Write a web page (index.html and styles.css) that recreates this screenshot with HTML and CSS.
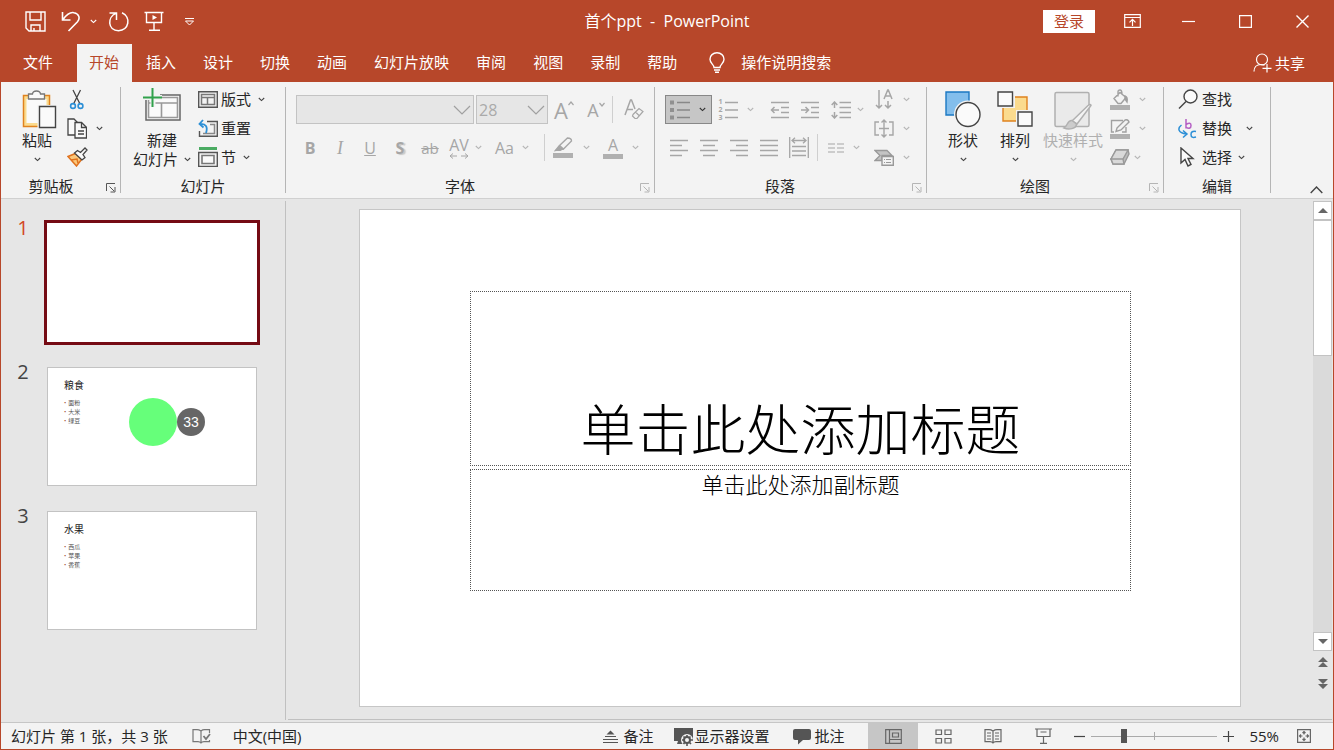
FILE: index.html
```html
<!DOCTYPE html>
<html lang="zh-CN">
<head>
<meta charset="utf-8">
<meta name="viewport" content="width=device-width, initial-scale=1">
<title>首个ppt - PowerPoint</title>
<link rel="stylesheet" href="styles.css">
</head>
<body>
<svg class="defs" aria-hidden="true">
  <symbol id="chev" viewBox="0 0 7 5"><path d="M.8 1l2.700 2.600L6.200 1" fill="none" stroke="currentColor" stroke-width="1.1"/></symbol>
  <symbol id="launch" viewBox="0 0 10 10"><path d="M.5 8V.5H9M3.500 3.500L8 8M9 4v5H4.500" fill="none" stroke="currentColor"/></symbol>
</svg>
<div class="app">
  <header class="titlebar">
    <div class="quick">
      <button class="ib save" aria-label="保存"><svg width="21" height="21" fill="none" stroke="currentColor" stroke-width="1.400"><path d="M1 1h19v19H4l-3-3zM5 1v8h11V1M6 20v-6h9v6M9 17v3"/></svg></button>
      <button class="ib undo" aria-label="撤消"><svg width="20" height="21" fill="none" stroke="currentColor" stroke-width="1.600"><path d="M1.500 1v8h8M2 8.500C6 3 10 1 13 1.700c5 1 6.500 5.500 3.500 9L7.500 20"/></svg></button>
      <button class="ib more" aria-label="撤消选项"><svg width="7" height="5"><use href="#chev"/></svg></button>
      <button class="ib redo" aria-label="重复"><svg width="22" height="21" fill="none" stroke="currentColor" stroke-width="1.500"><path d="M8.500 9V2H1.500M8 2.200C-1 6-.5 19.500 10.500 19.700 21 19.500 23.500 6 14 1.800"/></svg></button>
      <button class="ib show" aria-label="从头开始"><svg width="20" height="21" fill="none" stroke="currentColor" stroke-width="1.400"><path d="M.5 1.500h19M2.500 1.500v10h15v-10M10 11.500V19M5 19.300h11"/><path d="M8.500 4v5l4.500-2.500z" fill="currentColor" stroke="none"/></svg></button>
      <button class="ib" aria-label="自定义快速访问工具栏"><svg width="11" height="9" fill="none" stroke="currentColor"><path d="M1 1.500h9M1.500 4h8l-4 4z"/></svg></button>
    </div>
    <h1 class="doc-name">首个ppt &nbsp;-&nbsp; PowerPoint</h1>
    <div class="win">
      <button class="login">登录</button>
      <button class="wb" aria-label="功能区显示选项"><svg width="17" height="14" fill="none" stroke="currentColor" stroke-width="1.200"><path d="M.7.700h15.600v12.600H.700zM.700 3.500h15.600M8.500 12V5.500M5.500 8.300l3-3 3 3"/></svg></button>
      <button class="wb" aria-label="最小化"><svg width="13" height="13"><path d="M0 6.500h13" stroke="currentColor" stroke-width="1.200"/></svg></button>
      <button class="wb" aria-label="最大化"><svg width="13" height="13"><path d="M.600.600h11.800v11.800H.600z" fill="none" stroke="currentColor" stroke-width="1.200"/></svg></button>
      <button class="wb" aria-label="关闭"><svg width="13" height="13"><path d="M.500.500l12 12M12.500.500l-12 12" stroke="currentColor" stroke-width="1.400"/></svg></button>
    </div>
  </header>
  <nav class="tabs">
    <button class="tab file">文件</button>
    <button class="tab on">开始</button>
    <button class="tab">插入</button>
    <button class="tab">设计</button>
    <button class="tab">切换</button>
    <button class="tab">动画</button>
    <button class="tab">幻灯片放映</button>
    <button class="tab">审阅</button>
    <button class="tab">视图</button>
    <button class="tab">录制</button>
    <button class="tab">帮助</button>
    <button class="tab tell"><svg width="16" height="21" fill="none" stroke="currentColor" stroke-width="1.400"><path d="M5 15.500c0-3-4-4-4-8.300C1 3.500 4 .800 8 .800s7 2.700 7 6.400c0 4.300-4 5.300-4 8.300zM5 18h6M6 20.300h4"/></svg>操作说明搜索</button>
    <button class="tab share"><svg width="19" height="20" fill="none" stroke="currentColor" stroke-width="1.200"><circle cx="9" cy="6.500" r="5.500"/><path d="M1 18.500c0-4 2.500-7 7-7 1.500 0 2.500.200 3.500.700M14 11v8.500M9.500 15.300H18.500"/></svg>共享</button>
  </nav>

  <section class="ribbon">
    <div class="group clip">
      <div class="body">
        <button class="big"><svg width="36" height="40"><path d="M1.500 5.500h26v31h-26z" fill="#fbdb8e" stroke="#e0821e" stroke-width="1.500"/><path d="M4.500 9h20v24h-20z" fill="#fafafa"/><path d="M6.500 9V4h4c.5-4 7.500-4 8 0h4v5z" fill="#fafafa" stroke="#777" stroke-width="1.300"/><path d="M15.500 15h19v24h-19z" fill="#f3f3f3"/><path d="M17.500 16.500h16v21h-16z" fill="#fafafa" stroke="#444" stroke-width="1.400"/></svg><span>粘贴</span><svg class="chev"><use href="#chev"/></svg></button>
        <div class="stack">
          <button class="row" aria-label="剪切"><svg width="20" height="21" fill="none"><path d="M6 1l7 14M13.500 1L6.500 15" stroke="#444" stroke-width="1.300"/><circle cx="6" cy="17" r="2.400" stroke="#2c8fd6" stroke-width="1.600"/><circle cx="13.500" cy="17" r="2.400" stroke="#2c8fd6" stroke-width="1.600"/></svg></button>
          <button class="row wide" aria-label="复制"><svg width="20" height="21" fill="#fafafa" stroke="#444" stroke-width="1.300"><path d="M1 1h6l4 4v12H1z"/><path d="M8 4.500h6.500l5 5v10.500H8z"/><path d="M14.500 4.500v5h5M11 13h6M11 16h6" fill="none"/></svg><svg class="chev"><use href="#chev"/></svg></button>
          <button class="row" aria-label="格式刷"><svg width="21" height="20"><path d="M1 9.500l7.500-3 6 6-5 6.500z" fill="#fbc87b" stroke="#e0721e" stroke-width="1.500"/><path d="M4 13l6-1 1 4" fill="none" stroke="#e0721e" stroke-width="1.500"/><path d="M7.500 6l3-2.500 3 2 4.500-4.500 2 2-4 4.500 2 3-3 2.500z" fill="#fafafa" stroke="#444" stroke-width="1.300"/></svg></button>
        </div>
      </div>
      <div class="label"><span>剪贴板</span><button class="launch" aria-label="剪贴板设置"><svg><use href="#launch"/></svg></button></div>
    </div>
    <i class="sep"></i>
    <div class="group slides">
      <div class="body">
        <button class="big"><svg width="40" height="40"><path d="M4 8h34v25H4z" fill="#fafafa" stroke="#666" stroke-width="1.500"/><path d="M6.500 10.500h29v20h-29zM6.500 16h29M19.500 16v14.500" fill="none" stroke="#999" stroke-width="1.600"/><path d="M1 5h17v3H6v4H1z" fill="#f3f3f3"/><path d="M11 1v19M1 10.500h19" stroke="#f3f3f3" stroke-width="5"/><path d="M10.500 1v19M1 10.500h19" stroke="#31a24c" stroke-width="2"/></svg><span>新建</span><span class="line2">幻灯片 <svg class="chev"><use href="#chev"/></svg></span></button>
        <div class="stack">
          <button class="row"><svg width="20" height="17" fill="none"><path d="M.700.700h18.600v15.600H.700z" stroke="#555" stroke-width="1.400"/><path d="M3.500 3.500h13v10h-13zM3.500 6.500h13M9.500 6.500v7" stroke="#777" stroke-width="1.500"/></svg>版式<svg class="chev"><use href="#chev"/></svg></button>
          <button class="row"><svg width="20" height="18" fill="none"><path d="M9 2.500h10.300v14.800H1.500V12" stroke="#555" stroke-width="1.400"/><path d="M12 5.500h4.500v9H5" stroke="#888" stroke-width="1.500"/><path d="M5 1L1.500 5l4 3.500M2 5c6-.500 8 3 6 9" stroke="#2c8fd6" stroke-width="1.800"/></svg>重置</button>
          <button class="row"><svg width="20" height="20" fill="none"><path d="M1 1.500h18" stroke="#4aab62" stroke-width="3"/><path d="M.700 5.500h18.600v14H.700z" stroke="#555" stroke-width="1.400"/><path d="M4 8.500h12v8H4z" fill="#fafafa" stroke="#777" stroke-width="1.600"/></svg>节<svg class="chev"><use href="#chev"/></svg></button>
        </div>
      </div>
      <div class="label"><span>幻灯片</span></div>
    </div>
    <i class="sep"></i>
    <div class="group font off">
      <div class="body rows">
        <div class="line">
          <span class="combo face"><select aria-label="字体" disabled><option></option></select><svg width="18" height="10"><path d="M1 1l8 8 8-8" fill="none" stroke="currentColor" stroke-width="1.200"/></svg></span>
          <span class="combo size"><select aria-label="字号" disabled><option>28</option></select><svg width="18" height="10"><path d="M1 1l8 8 8-8" fill="none" stroke="currentColor" stroke-width="1.200"/></svg></span>
          <button class="t grow">A<svg width="6" height="20"><path d="M.500 5l2.500-3 2.500 3" fill="none" stroke="currentColor" stroke-width="1.200"/></svg></button>
          <button class="t shrink">A<svg width="6" height="20"><path d="M.500 3l2.500 3 2.500-3" fill="none" stroke="currentColor" stroke-width="1.200"/></svg></button>
          <i class="bar"></i>
          <button class="t clear" aria-label="清除所有格式"><svg width="20" height="21" fill="none" stroke="currentColor" stroke-width="1.500"><path d="M1 16L6.500 1h1L11 10M3 10.500h6"/><path d="M9 15.500l6-6 4 3-6 7h-2L8.500 17zM11.500 13l4 4" stroke-width="1.200"/></svg></button>
        </div>
        <div class="line">
          <button class="t"><b>B</b></button>
          <button class="t"><em>I</em></button>
          <button class="t"><u>U</u></button>
          <button class="t shadow"><b>S</b></button>
          <button class="t small"><s>ab</s></button>
          <button class="t split av"><span>AV<svg width="20" height="6"><path d="M4 .500L1 3l3 2.500M1 3h7M12 3h7M16 .500L19 3l-3 2.500" fill="none" stroke="currentColor"/></svg></span><svg class="chev"><use href="#chev"/></svg></button>
          <button class="t split aa"><span>Aa</span><svg class="chev"><use href="#chev"/></svg></button>
          <i class="bar"></i>
          <button class="t split" aria-label="突出显示"><svg width="20" height="21"><path d="M0 16h20v5H0z" fill="#b0b0b0"/><path d="M6.500 8.500L14.500 1q4 0 4 3l-8 8zM6.500 8.500L2.500 13.500l8-1.500" fill="none" stroke="currentColor" stroke-width="1.400"/><path d="M6 9l-4.500 5h6l3-2z" fill="currentColor"/></svg><svg class="chev"><use href="#chev"/></svg></button>
          <button class="t split color"><span>A</span><svg class="chev"><use href="#chev"/></svg></button>
        </div>
      </div>
      <div class="label"><span>字体</span><button class="launch" aria-label="字体设置"><svg><use href="#launch"/></svg></button></div>
    </div>
    <i class="sep"></i>
    <div class="group para off">
      <div class="body">
        <div class="rows">
          <div class="line">
            <button class="t split pressed" aria-label="项目符号"><svg width="20" height="20" stroke="currentColor"><path d="M0 2.500h4M0 10h4M0 17.500h4" stroke="#909090" stroke-width="4"/><path d="M7 2.500h13M7 10h13M7 17.500h13" stroke-width="1.500"/></svg><svg class="chev dark"><use href="#chev"/></svg></button>
            <button class="t split num" aria-label="编号"><span class="digits"><i>1</i><i>2</i><i>3</i></span><svg width="13" height="20" stroke="currentColor" stroke-width="1.500"><path d="M0 2.500h13M0 10h13M0 17.500h13"/></svg><svg class="chev"><use href="#chev"/></svg></button>
            <button class="t first" aria-label="减少缩进"><svg width="20" height="18" fill="none" stroke="currentColor" stroke-width="1.500"><path d="M1 1.500h18M11 6.500h8M11 11.500h8M1 16.500h18M1 9h8M4.500 6L1.500 9l3 3"/></svg></button>
            <button class="t" aria-label="增加缩进"><svg width="20" height="18" fill="none" stroke="currentColor" stroke-width="1.500"><path d="M1 1.500h18M11 6.500h8M11 11.500h8M1 16.500h18M1 9h8M5.500 6l3 3-3 3"/></svg></button>
            <button class="t split ls" aria-label="行距"><svg width="20" height="18" fill="none" stroke="currentColor" stroke-width="1.500"><path d="M8.500 1.500H20M8.500 6.500H20M8.500 11.500H20M8.500 16.500H20M3.500 1v6M3.500 11v6M.700 4l2.800-3 2.800 3M.700 14l2.800 3 2.800-3"/></svg><svg class="chev"><use href="#chev"/></svg></button>
          </div>
          <div class="line">
            <button class="t" aria-label="左对齐"><svg width="20" height="18" stroke="currentColor" stroke-width="1.500"><path d="M1 1.500h18M1 6.500h12M1 11.500h18M1 16.500h12"/></svg></button>
            <button class="t" aria-label="居中"><svg width="20" height="18" stroke="currentColor" stroke-width="1.500"><path d="M1 1.500h18M4 6.500h12M1 11.500h18M4 16.500h12"/></svg></button>
            <button class="t" aria-label="右对齐"><svg width="20" height="18" stroke="currentColor" stroke-width="1.500"><path d="M1 1.500h18M7 6.500h12M1 11.500h18M7 16.500h12"/></svg></button>
            <button class="t" aria-label="两端对齐"><svg width="20" height="18" stroke="currentColor" stroke-width="1.500"><path d="M1 1.500h18M1 6.500h18M1 11.500h18M1 16.500h18"/></svg></button>
            <button class="t" aria-label="分散对齐"><svg width="20" height="21" fill="none" stroke="currentColor" stroke-width="1.300"><path d="M.700 0v21M19.300 0v21M3 9.500h14M3 14h14M3 18.500h14M3 3.500h14M6 .800L3 3.500l3 2.700M14 .800l3 2.700-3 2.700"/></svg></button>
            <i class="bar"></i>
            <button class="t split cols" aria-label="分栏"><svg width="16" height="10" stroke="currentColor" stroke-width="1.200"><path d="M0 1h7M9 1h7M0 5h7M9 5h7M0 9h7M9 9h7"/></svg><svg class="chev"><use href="#chev"/></svg></button>
          </div>
        </div>
        <div class="stack">
          <button class="row" aria-label="文字方向"><svg width="20" height="21" fill="none" stroke="currentColor" stroke-width="1.500"><path d="M5 1v18M2 16l3 3 3-3M14 12v7M11 16l3 3 3-3M10 10l3.700-9h.600L18 10M11.500 7h5"/></svg><svg class="chev"><use href="#chev"/></svg></button>
          <button class="row" aria-label="对齐文本"><svg width="20" height="19" fill="none" stroke="currentColor" stroke-width="1.400"><path d="M5 3H1v13h4M15 3h4v13h-4M5 9.500h10M10 1v17M7.500 3.500L10 1l2.500 2.500M7.500 15.500L10 18l2.500-2.500"/></svg><svg class="chev"><use href="#chev"/></svg></button>
          <button class="row" aria-label="转换为 SmartArt"><svg width="20" height="17"><path d="M1 1.500h12l5 5H8v5H1l5-5z" fill="#c4c4c4" stroke="#999" stroke-width="1.300"/><path d="M8 7.500h11.300v8.800H8z" fill="#f3f3f3" stroke="#999" stroke-width="1.400"/><path d="M10 10.500h1M12 10.500h5M10 13.500h1M12 13.500h5" stroke="#999"/></svg><svg class="chev"><use href="#chev"/></svg></button>
        </div>
      </div>
      <div class="label"><span>段落</span><button class="launch" aria-label="段落设置"><svg><use href="#launch"/></svg></button></div>
    </div>
    <i class="sep"></i>
    <div class="group draw">
      <div class="body">
        <button class="big"><svg width="36" height="40"><path d="M1 2h23v23H1z" fill="#83beec" stroke="#1b78c2" stroke-width="1.400"/><circle cx="23" cy="24.500" r="14" fill="#f3f3f3"/><circle cx="23" cy="24.500" r="12" fill="#fafafa" stroke="#444" stroke-width="1.400"/></svg><span>形状</span><svg class="chev"><use href="#chev"/></svg></button>
        <button class="big"><svg width="36" height="40"><path d="M6 7h24v24H6z" fill="#fbdb8e" stroke="#e0821e" stroke-width="1.400"/><path d="M0 1h18v17H0zM19 20h17v17H19z" fill="#f3f3f3"/><path d="M1 2h14.500v14H1zM21 22h14v14H21z" fill="#fafafa" stroke="#444" stroke-width="1.400"/></svg><span>排列</span><svg class="chev"><use href="#chev"/></svg></button>
        <button class="big dim"><svg width="38" height="40" fill="#eaeaea" stroke="#b0b0b0" stroke-width="1.500"><path d="M1 4q0-1.500 1.500-1.500h31Q35 2.500 35 4v31q0 1.500-1.500 1.500h-31Q1 36.500 1 35z"/><path d="M18 31L34 15.500q3-2 3 0L23 34z" fill="#f3f3f3"/><path d="M10 38c4-2 3-8 8-7.500l4.500 3.500c0 5-8 6-12.500 4z" fill="#ccc"/></svg><span>快速样式</span><svg class="chev"><use href="#chev"/></svg></button>
        <div class="stack off">
          <button class="row" aria-label="形状填充"><svg width="20" height="21" fill="none" stroke="#a0a0a0" stroke-width="1.400"><path d="M0 18.500h20" stroke="#b0b0b0" stroke-width="5"/><path d="M8 2.500v5M4 9.500l6-6 6 5-5 6H8zM8 3q0-2 2-2t2 4"/><path d="M15 7q3 1 2 6l-2-3z" fill="#a0a0a0"/></svg><svg class="chev"><use href="#chev"/></svg></button>
          <button class="row" aria-label="形状轮廓"><svg width="20" height="21" fill="none" stroke="#a0a0a0" stroke-width="1.400"><path d="M0 18.500h20" stroke="#b0b0b0" stroke-width="5"/><path d="M13 2.500H1.500V14H4M16 9v5h-4M7 10l8-8q3-1 4 2l-8 8-5 1.500z"/></svg><svg class="chev"><use href="#chev"/></svg></button>
          <button class="row fx" aria-label="形状效果"><svg width="20" height="17" stroke="#999" stroke-width="1.400"><path d="M1 10L6 1h12l1 4-5 10H3z" fill="#bbb"/><path d="M1 10L6 1h12l-5 9zM1 10l2 5h11l-1-5z" fill="#d9d9d9"/></svg><svg class="chev"><use href="#chev"/></svg></button>
        </div>
      </div>
      <div class="label"><span>绘图</span><button class="launch faint" aria-label="绘图设置"><svg><use href="#launch"/></svg></button></div>
    </div>
    <i class="sep"></i>
    <div class="group edit">
      <div class="body">
        <div class="stack">
          <button class="row"><svg width="20" height="20" fill="#fafafa" stroke="#444" stroke-width="1.400"><circle cx="12.500" cy="7.500" r="6.500"/><path d="M8 12.500L1 19.500"/></svg>查找</button>
          <button class="row"><svg width="20" height="21" fill="none"><path d="M3.500 7C-.500 10-.500 15 8.500 16M5 12.500L9 16l-4 3.500" stroke="#2c8fd6" stroke-width="1.500"/><path d="M8 1v9.500M8 6.500q5-3 5 1T8 9.500" stroke="#b55fc4" stroke-width="1.500"/><path d="M18 13.500q-5-1-5 3t5 2.500" stroke="#2c8fd6" stroke-width="1.500"/></svg>替换<svg class="chev far"><use href="#chev"/></svg></button>
          <button class="row"><svg width="20" height="20"><path d="M3 1v15l4-3.500 3 6.500 3-1.500-3-6h5z" fill="#fafafa" stroke="#444" stroke-width="1.400"/></svg>选择<svg class="chev"><use href="#chev"/></svg></button>
        </div>
      </div>
      <div class="label"><span>编辑</span></div>
    </div>
    <i class="sep"></i>
    <button class="collapse" aria-label="折叠功能区"><svg width="13" height="8"><path d="M.700 7l5.800-6 5.800 6" fill="none" stroke="#444" stroke-width="1.400"/></svg></button>
  </section>

  <main class="work">
    <ol class="thumbs">
      <li class="on"><span>1</span><div class="thumb"></div></li>
      <li><span>2</span><div class="thumb">
        <div><h3>粮食</h3><ul><li>面粉</li><li>大米</li><li>绿豆</li></ul></div>
        <div class="discs"><i class="green"></i><b>33</b></div></div></li>
      <li><span>3</span><div class="thumb"><div><h3>水果</h3><ul><li>西瓜</li><li>苹果</li><li>香蕉</li></ul></div></div></li>
    </ol>
    <div class="stage">
      <div class="canvas">
        <article class="slide">
          <div class="ph title">单击此处添加标题</div>
          <div class="ph sub">单击此处添加副标题</div>
        </article>
      </div>
      <div class="scroll">
        <button aria-label="向上"><svg width="10" height="5"><path d="M0 5l5-5 5 5z"/></svg></button>
        <div class="track"><div class="knob"></div></div>
        <button aria-label="向下"><svg width="10" height="5"><path d="M0 0l5 5 5-5z"/></svg></button>
        <button class="page" aria-label="上一张幻灯片"><svg width="10" height="10"><path d="M0 5l5-5 5 5zM0 10l5-5 5 5z"/></svg></button>
        <button class="page" aria-label="下一张幻灯片"><svg width="10" height="10"><path d="M0 0l5 5 5-5zM0 5l5 5 5-5z"/></svg></button>
      </div>
    </div>
  </main>

  <footer class="status">
    <span class="count">幻灯片 第 1 张，共 3 张</span>
    <button class="spell" aria-label="拼写检查"><svg width="19" height="15" fill="none" stroke="#777" stroke-width="1.200"><path d="M9 2v12M9 2Q7 .700 5 .700H1v12h5q2 0 3 1.300 1-1.300 3-1.300h5.500V11M9 2q1.500-1.300 3.500-1.300h5V4"/><path d="M11.500 7l2.500 3 4-5" stroke-width="1.800"/></svg></button>
    <button>中文(中国)</button>
    <div class="tools">
      <button class="notes"><svg width="15" height="13" stroke="#555" stroke-width="1.200"><path d="M3.500 4.500l4-4 4 4z" fill="#555" stroke="none"/><path d="M2 6.500h11M0 9.500h15M0 12.500h15"/></svg>备注</button>
      <button class="display"><svg width="20" height="19"><path d="M0 1h19v13H0zM4 14h5v3H3z" fill="#555"/><circle cx="13" cy="13" r="6" fill="#f3f3f3"/><circle cx="13" cy="13" r="3" fill="none" stroke="#555" stroke-width="2"/><path d="M13 8v2M13 16v3M8 13h2M16 13h3M9.500 9.500l1.500 1.500M15 15l2 2M16.500 9.500L15 11M11 15l-1.500 2" stroke="#555" stroke-width="1.600"/></svg>显示器设置</button>
      <button class="comment"><svg width="18" height="17"><path d="M2 1h14q2 0 2 2v7q0 2-2 2h-6l-5 4.500V12H2q-2 0-2-2V3q0-2 2-2z" fill="#555"/></svg>批注</button>
      <button class="view on" aria-label="普通视图"><svg width="17" height="15" fill="none" stroke="#666" stroke-width="1.200"><path d="M.700.700h15.600v13.600H.700zM4.500.700v13.600M4.500 10.500h12M7.500 4h6v4h-6z"/></svg></button>
      <button class="view" aria-label="幻灯片浏览"><svg width="17" height="15" fill="none" stroke="#666" stroke-width="1.200"><path d="M1 1h5.500v4.500H1zM10 1h6v4.500h-6zM1 9.500h5.500V14H1zM10 9.500h6V14h-6z"/></svg></button>
      <button class="view" aria-label="阅读视图"><svg width="18" height="15" fill="none" stroke="#666" stroke-width="1.200"><path d="M9 2v12M9 2Q7 .700 5 .700H1v12h5q2 0 3 1.300 1-1.300 3-1.300h5v-12h-4q-2 0-4 1.300M3 4h4M3 7h4M3 10h4M11 4h4M11 7h4M11 10h4"/></svg></button>
      <button class="view" aria-label="幻灯片放映"><svg width="17" height="16" fill="none" stroke="#666" stroke-width="1.200"><path d="M0 1h17M2 1v7.500h13V1M8.500 8.500V15M5 15.300h7M5.500 4h6"/></svg></button>
      <button class="step" aria-label="缩小"><svg width="11" height="11"><path d="M0 5.500h11" stroke="#444" stroke-width="1.200"/></svg></button>
      <input class="zoom" type="range" min="0" max="100" value="25" aria-label="缩放">
      <button class="step" aria-label="放大"><svg width="11" height="11"><path d="M0 5.500h11M5.500 0v11" stroke="#444" stroke-width="1.200"/></svg></button>
      <button class="pct">55%</button>
      <button class="fit" aria-label="适应窗口"><svg width="14" height="14" fill="none" stroke="#666" stroke-width="1.200"><path d="M.600.600h12.800v12.800H.600zM7 2v3.500M7 8.500V12M2 7h3.500M8.500 7H12M5.500 4L7 2.500 8.500 4M5.500 10L7 11.500 8.500 10M4 5.500L2.500 7 4 8.500M10 5.500L11.500 7 10 8.500"/></svg></button>
    </div>
  </footer>
</div>
</body>
</html>
```
FILE: styles.css
```css
* { box-sizing: border-box; }
body { margin: 0; font: 15px/20px "Open Sans", "Noto Sans CJK SC", sans-serif; color: #262626; }
button { font: inherit; color: inherit; background: none; border: 0; padding: 0; margin: 0; display: flex; align-items: center; white-space: nowrap; }
svg { display: block; flex: none; }
h1, h3, ul, ol { margin: 0; padding: 0; font-weight: 400; list-style: none; }
i { font-style: normal; }
.defs { position: absolute; width: 0; height: 0; }
.app { height: 100vh; min-width: 1280px; display: flex; flex-direction: column; background: #e6e6e6; border: solid #b7472a; border-width: 0 1px 1px; }

.titlebar { height: 44px; flex: none; display: grid; grid-template-columns: 1fr auto 1fr; align-items: center; background: #b7472a; color: #fff; padding: 0 24px 2px 24px; }
.quick { display: flex; align-items: center; }
.undo { margin-left: 15px; }
.more { margin-left: 9px; }
.redo { margin-left: 11px; }
.show { margin-left: 14px; }
.show + .ib { margin-left: 20px; }
.doc-name { font-size: 16px; line-height: 20px; }
.win { display: flex; justify-content: flex-end; align-items: center; }
.login { background: #fff; color: #b7472a; height: 23px; padding: 0 11px; margin-right: 10px; }
.wb { width: 57px; height: 24px; justify-content: center; }
.wb:last-child { margin-right: -22px; }
.login + .wb { width: 55px; }

.tabs { height: 38px; flex: none; display: flex; background: #b7472a; color: #fff; }
.tab { padding: 0 13px 2px 14px; }
.tab.file { padding: 0 24px 2px 22px; }
.tab.on { background: #f3f3f3; color: #b7472a; padding: 0 13px 2px 12px; }
.tell { gap: 16px; padding: 0 0 2px 19px; }
.share { margin-left: auto; gap: 3px; padding: 0 28px 0 0; }

.ribbon { flex: none; display: flex; background: #f3f3f3; border-bottom: 1px solid #d0d0d0; padding-top: 3px; }
.sep { width: 1px; background: #b5b5b5; margin: 2px 0 5px; flex: none; }
.group { display: flex; flex-direction: column; }
.clip { width: 119px; }
.slides { width: 164px; }
.font { width: 368px; }
.para { width: 271px; }
.draw { width: 236px; }
.edit { width: 106px; }
.body { height: 87px; display: flex; align-items: flex-start; }
.label { display: flex; justify-content: center; height: 26px; padding-top: 4px; position: relative; }
.label span { line-height: 20px; }
.label .launch { position: absolute; right: 4px; top: 11px; color: #555; }
.off .launch, .label .faint { color: #b5b5b5; }
.launch svg { width: 10px; height: 10px; }
.chev { width: 7px; height: 5px; color: #444; }
.off .chev, .dim .chev { color: #b5b5b5; }
.off .chev.dark { color: #333; }
.off button { color: #a6a6a6; }
.off .label span { color: #262626; }

.big { flex-direction: column; padding-top: 5px; width: 52px; }
.big span { line-height: 20px; }
.big > .chev { margin-top: 7px; }
.big .line2 { display: flex; align-items: center; gap: 6px; line-height: 18px; }
.dim { color: #b0b0b0; }
.stack { display: flex; flex-direction: column; }
.row { height: 28px; margin-bottom: 1px; gap: 3px; }
.row .chev { margin-left: 4px; }
.off .row.fx .chev { margin-left: 1px; }
.clip .body { padding-left: 10px; }
.clip .big > svg:first-child { margin-left: 5px; }
.clip .stack { padding-left: 4px; }
.clip .row { gap: 5px; }
.clip .label { padding-right: 19px; }
.slides .body { padding-left: 8px; gap: 3px; }
.slides .big { width: 66px; padding-top: 2px; }
.slides .big > svg { margin-bottom: 3px; }
.draw .body { padding-left: 10px; }
.draw .dim { width: 64px; }
.draw .stack { padding-left: 5px; }
.off .row .chev { margin-left: 6px; }
.para .off .row .chev { margin-left: 4px; }
.draw .label { padding-right: 20px; }
.edit .body { padding-left: 14px; }
.edit .row { gap: 4px; }
.edit .row .chev { margin-left: 2px; }
.edit .row .chev.far { margin-left: 10px; }
.font .label { padding-right: 20px; }
.para .label { padding-right: 21px; }

.rows { display: flex; flex-direction: column; padding-top: 10px; gap: 9px; }
.line { display: flex; align-items: center; height: 29px; }
.body.rows { padding-left: 9px; }
.combo { position: relative; display: block; height: 29px; margin-left: 1px; }
.combo select { appearance: none; width: 100%; height: 100%; border: 1px solid #c3c3c3; border-radius: 0; background: #e6e6e6; color: #aaa; opacity: 1; font: inherit; font-size: 16px; padding: 0 2px; }
.combo svg { position: absolute; right: 3px; top: 10px; color: #a0a0a0; }
.face { width: 178px; }
.size { width: 72px; margin-left: 2px; }
.t { width: 30px; height: 28px; justify-content: center; font-size: 16px; }
.t.grow { font-size: 22px; width: 32px; }
.t.shrink { font-size: 18px; width: 32px; }
.t.clear { width: 36px; }
.t em { font-family: "Liberation Serif", serif; font-size: 18px; }
.t.shadow b { text-shadow: 2px 1px 1px #c8c8c8; }
.t.small { font-size: 15px; }
.bar { width: 1px; height: 27px; background: #cfcfcf; }
.line > .bar { margin: 0 3px 0 0; }
.split { width: auto; gap: 6px; padding: 0 5px; }
.av span { line-height: 16px; display: block; }
.av svg { margin: 0 auto; }
.av, .aa { padding: 0 5px 0 4px; }
.aa { margin-left: 4px; margin-right: 10px; gap: 8px; }
.split + .bar + .split { margin-right: 5px; padding-right: 3px; gap: 10px; }
.color { gap: 9px; }
.color span { line-height: 17px; width: 20px; border-bottom: 5px solid #b0b0b0; }
.para .rows { padding-left: 9px; width: 219px; }
.para .pressed { background: #c6c6c6; border: 1px solid #888; height: 29px; margin-left: 1px; gap: 9px; padding: 0 5px 0 3px; color: #888; width: 47px; }
.num { gap: 9px; margin-left: 1px; }
.num .digits { display: grid; width: 5px; margin-right: -7px; }
.digits i { font-size: 7px; line-height: 8px; font-weight: 700; }
.first { margin-left: 6px; }
.ls { margin-left: 1px; }
.para .line .bar { margin: 0 5px 0 3px; }
.cols { gap: 9px; }

.collapse { margin-left: auto; align-self: flex-end; padding: 0 10px 4px 0; }

.work { flex: 1; min-height: 0; display: flex; padding: 2px 1px 2px 0; }
.thumbs { width: 285px; flex: none; border-right: 1px solid #c0c0c0; padding: 19px 0 0 11px; display: flex; flex-direction: column; gap: 25px; }
.thumbs > li { display: flex; gap: 12px; font-size: 20px; color: #444; }
.thumbs > li > span { width: 22px; text-align: center; line-height: 10px; }
.thumb { width: 210px; height: 119px; background: #fff; border: 1px solid #c3c3c3; display: flex; padding: 11px 16px; margin-left: 1px; }
.thumbs .on { color: #d24726; gap: 10px; margin-bottom: -3px; }
.thumbs .on > span { padding-top: 3px; }
.on .thumb { width: 216px; height: 125px; border: 3px solid #750b14; margin-left: 0; }
.thumb h3 { font-size: 10px; line-height: 12px; color: #222; margin-bottom: 8px; }
.thumb ul li { font-size: 6px; line-height: 9px; color: #555; }
.thumb ul li::before { content: "•"; color: #a05030; margin-right: 2px; }
.discs { display: flex; align-items: center; margin: 19px 0 0 45px; height: 48px; }
.green { width: 48px; height: 48px; border-radius: 50%; background: #66ff7a; }
.discs b { width: 28px; height: 28px; border-radius: 50%; background: #666; color: #fff; font: 14px/28px "Liberation Sans", sans-serif; text-align: center; }
.stage { flex: 1; display: flex; margin-left: 2px; border-bottom: 1px solid #c0c0c0; }
.canvas { flex: 1; padding: 8px 72px 0 71px; }
.slide { width: 100%; aspect-ratio: 881 / 497; background: #fff; border: 1px solid #c6c6c6; padding: 81px 12.4% 0 12.5%; color: #000; text-align: center; }
.ph { border: 1px dotted #555; font-family: "Noto Sans CJK SC", sans-serif; }
.ph.title { font-size: 55px; line-height: 70px; font-weight: 300; height: 175px; display: flex; align-items: flex-end; justify-content: center; margin-bottom: 3px; padding-bottom: 4px; }
.ph.sub { font-size: 22px; line-height: 26px; font-weight: 300; height: 122px; }
.scroll { width: 19px; display: flex; flex-direction: column; fill: #666; }
.scroll button { height: 19px; background: #fff; border: 1px solid #c3c3c3; justify-content: center; }
.scroll .page { background: none; border: 0; height: 22px; }
.scroll .page:last-child { margin-bottom: 24px; }
.track { flex: 1; background: #dadada; }
.knob { height: 33%; background: #fff; border: 1px solid #c3c3c3; }

.status { height: 27px; flex: none; display: flex; align-items: stretch; background: #f3f3f3; border-top: 1px solid #c6c6c6; padding: 0 22px 0 10px; line-height: 26px; }
.spell { margin: 0 22px 0 24px; }
.tools { margin-left: auto; display: flex; }
.notes { gap: 5px; margin-right: 21px; }
.display { margin-right: 24px; }
.comment { gap: 3px; margin-right: 24px; }
.view { width: 50px; justify-content: center; }
.view.on { background: #c6c6c6; }
.step { margin-left: 6px; }
.zoom { appearance: none; width: 126px; margin: 0 0 0 6px; background: linear-gradient(#aaa, #aaa) 50% 50% / 1px 8px no-repeat, linear-gradient(#aaa, #aaa) 0 50% / 100% 1px no-repeat; }
.zoom::-webkit-slider-thumb { appearance: none; width: 6px; height: 14px; background: #555; }
.pct { margin-left: 15px; }
.fit { margin-left: 18px; }
```
